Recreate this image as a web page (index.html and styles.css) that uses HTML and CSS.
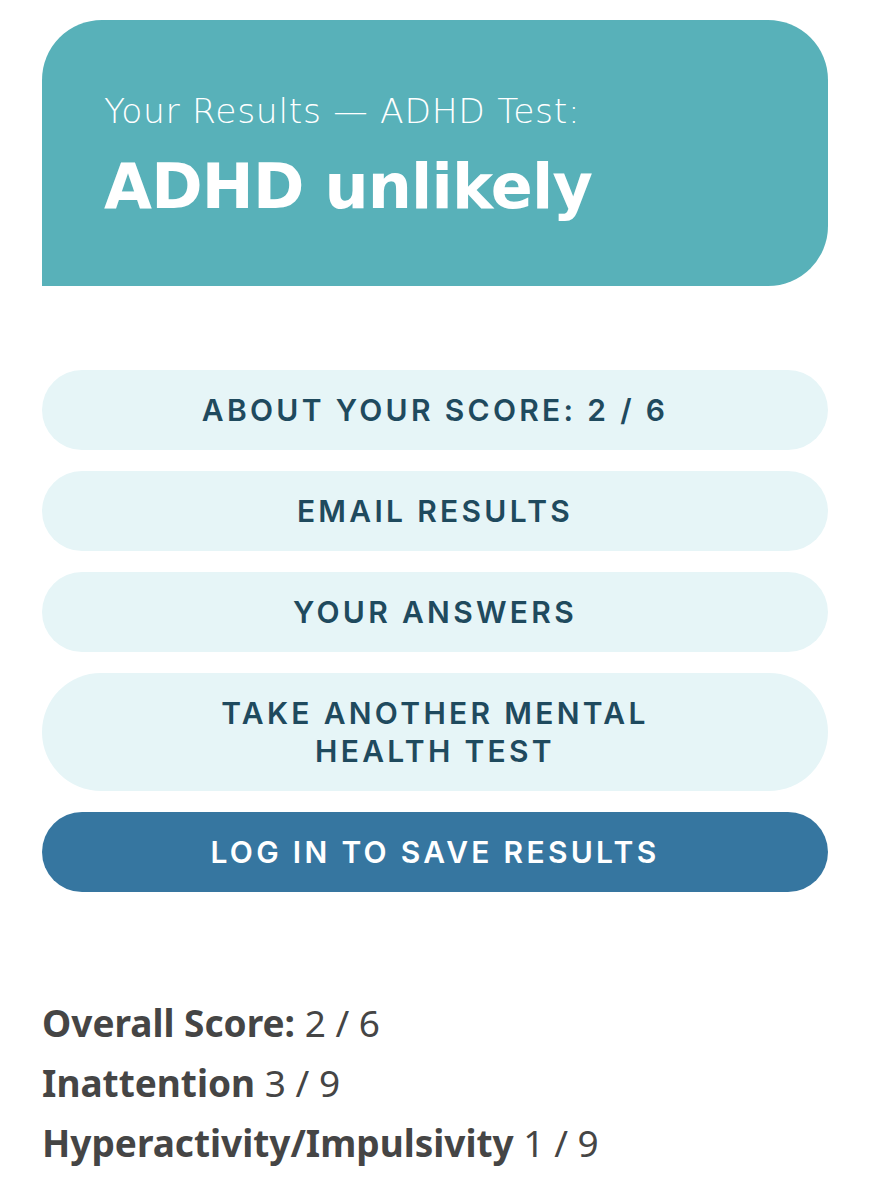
FILE: index.html
```html
<!DOCTYPE html>
<html lang="en">
<head>
<meta charset="utf-8">
<title>Your Results — ADHD Test</title>
<link rel="stylesheet" href="styles.css">
</head>
<body>
<main class="page">
  <section class="result-card">
    <p class="result-label">Your Results — ADHD Test:</p>
    <h1 class="result-title">ADHD unlikely</h1>
  </section>
  <nav class="actions">
    <a class="btn btn-light" href="#">ABOUT YOUR SCORE: 2 / 6</a>
    <a class="btn btn-light" href="#">EMAIL RESULTS</a>
    <a class="btn btn-light" href="#">YOUR ANSWERS</a>
    <a class="btn btn-light btn-tall" href="#">TAKE ANOTHER MENTAL<br>HEALTH TEST</a>
    <a class="btn btn-dark" href="#">LOG IN TO SAVE RESULTS</a>
  </nav>
  <section class="scores">
    <p class="score-line"><strong>Overall Score:</strong> 2 / 6</p>
    <p class="score-line"><strong>Inattention</strong> 3 / 9</p>
    <p class="score-line"><strong>Hyperactivity/Impulsivity</strong> 1 / 9</p>
  </section>
</main>
</body>
</html>
```
FILE: styles.css
```css
* { box-sizing: border-box; }
html, body { margin: 0; padding: 0; background: #ffffff; }
.page {
  padding: 20px 41px 0 42px;
  font-family: "DejaVu Sans", "Inter", sans-serif;
}
.result-card {
  background: #58b1b9;
  border-radius: 60px 60px 60px 0;
  height: 266px;
  padding: 71px 62px 0 62px;
  color: #ffffff;
}
.result-label {
  margin: 0;
  font-family: "DejaVu Sans", sans-serif;
  font-weight: 200;
  font-size: 34.5px;
  letter-spacing: 0.7px;
  line-height: 40px;
}
.result-title {
  margin: 21px 0 0 0;
  font-family: "DejaVu Sans", sans-serif;
  font-weight: 700;
  font-size: 62px;
  letter-spacing: -0.8px;
  line-height: 70px;
}
.actions {
  margin-top: 84px;
  display: flex;
  flex-direction: column;
  gap: 21px;
}
.btn {
  display: flex;
  align-items: center;
  justify-content: center;
  text-align: center;
  height: 80px;
  border-radius: 40px;
  text-decoration: none;
  font-family: "Inter", sans-serif;
  font-weight: 600;
  font-size: 30px;
  letter-spacing: 3.3px;
  line-height: 38px;
}
.btn-light { background: #e6f5f7; color: #1f4a5e; }
.btn-tall { height: 118px; border-radius: 59px; }
.btn-dark { background: #3676a0; color: #ffffff; }
.scores {
  margin-top: 101px;
  font-family: "Noto Sans", "Open Sans", sans-serif;
  color: #454545;
  font-size: 37px;
}
.score-line {
  margin: 0;
  line-height: 60px;
}
.score-line strong { font-weight: 700; }
```
